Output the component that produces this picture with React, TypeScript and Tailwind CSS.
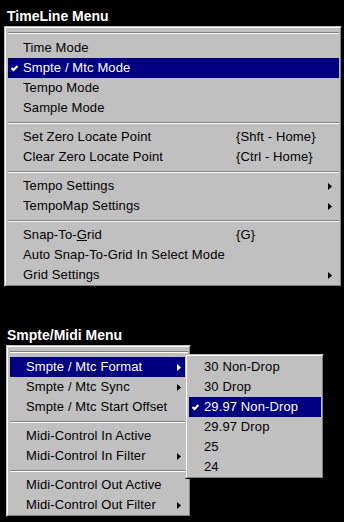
import React from "react";

type Item =
  | { sep: true }
  | {
      sep?: false;
      label: React.ReactNode;
      checked?: boolean;
      active?: boolean;
      shortcut?: string;
      arrow?: boolean;
    };

function Check() {
  return (
    <svg width="7" height="7" viewBox="0 0 7 7" className="block">
      <path d="M0.5 3 L2.5 5 L6.5 1" stroke="currentColor" strokeWidth="2" fill="none" />
    </svg>
  );
}

function Arrow() {
  return (
    <svg width="4" height="7" viewBox="0 0 4 7" className="block">
      <polygon points="0,0 4,3.5 0,7" fill="currentColor" />
    </svg>
  );
}

function Separator() {
  return (
    <div className="pt-[4px] pb-[3px]">
      <div className="h-px bg-[#808080]" />
      <div className="h-px bg-white" />
    </div>
  );
}

function Row({ item, gutter }: { item: Exclude<Item, { sep: true }>; gutter: string }) {
  return (
    <div
      className={`flex items-center h-5 pl-[3px] pr-[7px] ${
        item.active ? "bg-[#000080] text-white" : "text-black"
      }`}
    >
      <span className={`${gutter} shrink-0 flex items-center`}>{item.checked && <Check />}</span>
      <span className={item.shortcut ? "w-[213px] shrink-0 whitespace-nowrap" : "whitespace-nowrap"}>
        {item.label}
      </span>
      {item.shortcut && <span className="whitespace-nowrap">{item.shortcut}</span>}
      {item.arrow && (
        <span className="ml-auto">
          <Arrow />
        </span>
      )}
    </div>
  );
}

function Menu({
  items,
  gutter,
  tearOff,
  className,
}: {
  items: Item[];
  gutter: string;
  tearOff?: boolean;
  className: string;
}) {
  return (
    <div
      className={`border border-t-[#c0c0c0] border-l-[#c0c0c0] border-r-black border-b-black bg-[#c0c0c0] ${className}`}
    >
      <div
        className={`border border-t-white border-l-white border-r-[#808080] border-b-[#808080] pl-[2px] pr-[1px] ${
          tearOff ? "" : "pt-[1px]"
        }`}
      >
        {tearOff && (
          <div className="pt-[4px] pb-[4px]">
            <div className="h-px bg-[#808080]" />
            <div className="h-px bg-white" />
          </div>
        )}
        {items.map((it, i) => (it.sep ? <Separator key={i} /> : <Row key={i} item={it} gutter={gutter} />))}
      </div>
    </div>
  );
}

const timeline: Item[] = [
  { label: "Time Mode" },
  { label: "Smpte / Mtc Mode", checked: true, active: true },
  { label: "Tempo Mode" },
  { label: "Sample Mode" },
  { sep: true },
  { label: "Set Zero Locate Point", shortcut: "{Shft - Home}" },
  { label: "Clear Zero Locate Point", shortcut: "{Ctrl - Home}" },
  { sep: true },
  { label: "Tempo Settings", arrow: true },
  { label: "TempoMap Settings", arrow: true },
  { sep: true },
  {
    label: (
      <>
        Snap-To-<u>G</u>rid
      </>
    ),
    shortcut: "{G}",
  },
  { label: "Auto Snap-To-Grid In Select Mode" },
  { label: "Grid Settings", arrow: true },
];

const smpte: Item[] = [
  { label: "Smpte / Mtc Format", arrow: true, active: true },
  { label: "Smpte / Mtc Sync", arrow: true },
  { label: "Smpte / Mtc Start Offset" },
  { sep: true },
  { label: "Midi-Control In Active" },
  { label: "Midi-Control In Filter", arrow: true },
  { sep: true },
  { label: "Midi-Control Out Active" },
  { label: "Midi-Control Out Filter", arrow: true },
];

const formats: Item[] = [
  { label: "30 Non-Drop" },
  { label: "30 Drop" },
  { label: "29.97 Non-Drop", checked: true, active: true },
  { label: "29.97 Drop" },
  { label: "25" },
  { label: "24" },
];

export default function App() {
  return (
    <div className="w-[344px] h-[522px] bg-black overflow-hidden pt-[8px] text-[13px] leading-5 tracking-[0.12px] font-['Liberation_Sans',Arial,sans-serif]">
      <h1 className="ml-[7px] text-[14px] leading-4 tracking-normal font-bold text-white">TimeLine Menu</h1>
      <Menu items={timeline} gutter="w-[12px]" tearOff className="mt-[2px] ml-[4px] w-[338px]" />

      <h1 className="mt-[40px] ml-[7px] text-[14px] leading-4 tracking-normal font-bold text-white">
        Smpte/Midi Menu
      </h1>
      <div className="relative mt-[2px] ml-[6px] w-[185px]">
        <Menu items={smpte} gutter="w-[13px]" tearOff className="w-[185px]" />
        <div className="absolute left-[179px] top-[9px]">
          <Menu items={formats} gutter="w-[12px]" className="w-[139px]" />
        </div>
      </div>
    </div>
  );
}
